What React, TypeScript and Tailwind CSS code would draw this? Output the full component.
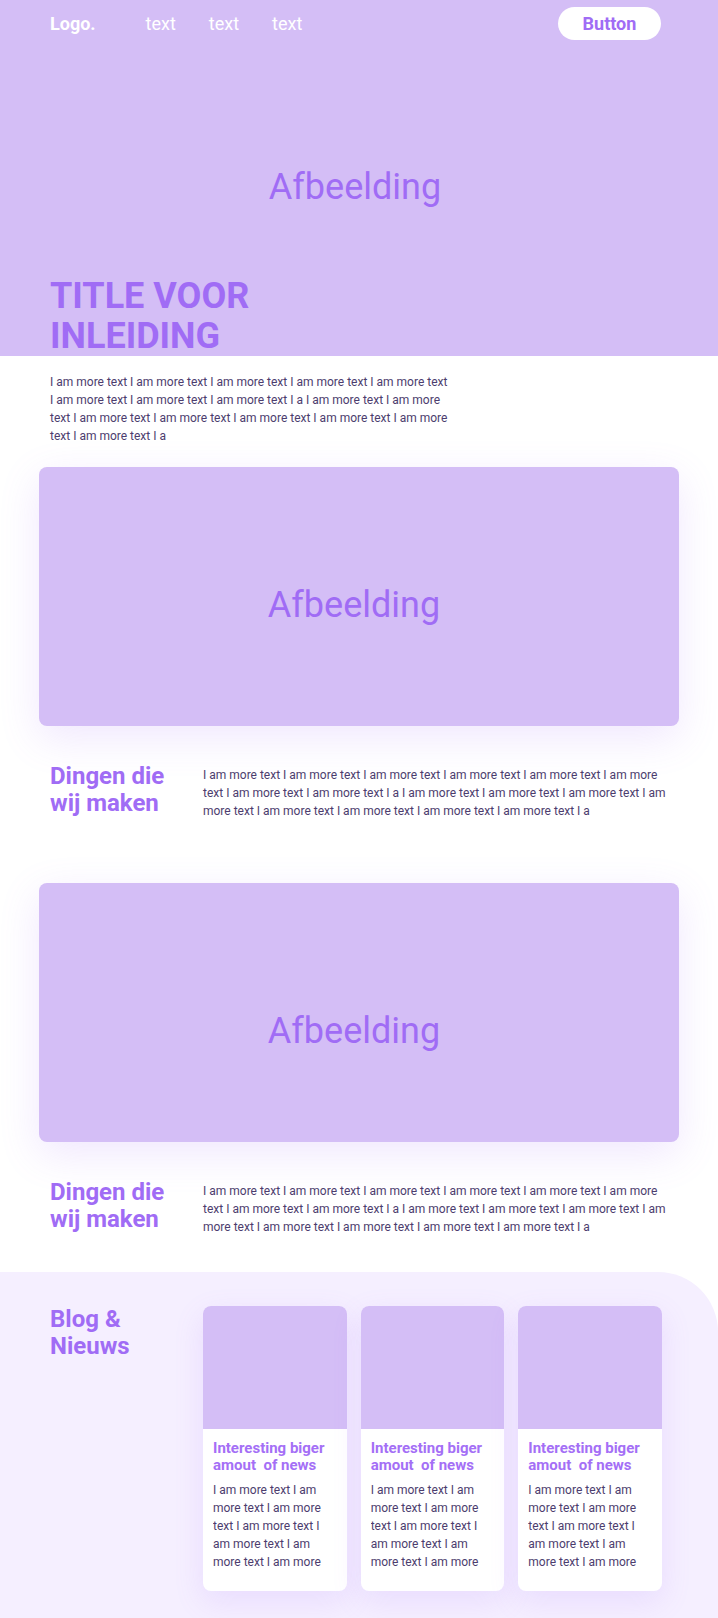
const para = "I am more text I am more text I am more text I am more text I am more text I am more text I am more text I am more text I a I am more text I am more text I am more text I am more text I am more text I am more text I am more text I am more text I a";

const cardText = "I am more text I am more text I am more text I am more text I am more text I am more text I am more";

function ImageCard({ offset }: { offset: string }) {
  return (
    <div className="mx-[39px] flex h-[259px] items-center justify-center rounded-lg bg-[#d4bef6] shadow-[0_12px_40px_rgba(160,108,247,0.16)]">
      <span className={`pr-[10px] text-[36px] text-[#a06cf5] ${offset}`}>Afbeelding</span>
    </div>
  );
}

function Feature() {
  return (
    <div className="flex items-start px-[50px]">
      <h2 className="w-[153px] shrink-0 text-[24px] font-bold leading-[27px] text-[#a06cf5]">
        Dingen die
        <br />
        wij maken
      </h2>
      <p className="mt-[3px] w-[466px] text-[12px] leading-[18px] text-[#4c3d6e]">{para}</p>
    </div>
  );
}

function BlogCard() {
  return (
    <div className="overflow-hidden rounded-lg bg-white shadow-[0_10px_30px_rgba(160,108,247,0.14)]">
      <div className="h-[123px] bg-[#d4bef6]" />
      <div className="px-[10px] pb-[20px] pt-[11px]">
        <h3 className="text-[15px] font-bold leading-[17px] text-[#a46ff6]">
          Interesting biger
          <br />
          amout&nbsp; of news
        </h3>
        <p className="mt-[7px] h-[90px] overflow-hidden text-[12px] leading-[18px] text-[#4c3d6e]">{cardText}</p>
      </div>
    </div>
  );
}

export default function App() {
  return (
    <div className="min-h-[1618px] bg-white font-['Roboto',sans-serif]">
      <section className="bg-[#d4bef6] px-[50px]">
        <nav className="flex h-[47px] items-center">
          <span className="text-[18px] font-bold text-white">Logo.</span>
          <div className="ml-[50px] flex gap-[33px] text-[18px] text-white">
            <span>text</span>
            <span>text</span>
            <span>text</span>
          </div>
          <button className="ml-auto mr-[7px] h-[33px] w-[103px] rounded-full bg-white text-[18px] font-bold text-[#a06cf5]">
            Button
          </button>
        </nav>
        <div className="mt-[118px] pr-[8px] text-center text-[36px] leading-[44px] text-[#a06cf5]">Afbeelding</div>
        <h1 className="mt-[67px] text-[36px] font-bold leading-[40px] text-[#a06cf5]">
          TITLE VOOR
          <br />
          INLEIDING
        </h1>
      </section>

      <p className="mt-[17px] w-[500px] px-[50px] text-[12px] leading-[18px] text-[#4c3d6e]">{para}</p>

      <div className="mt-[22px]">
        <ImageCard offset="pt-[16px]" />
      </div>
      <div className="mt-[37px]">
        <Feature />
      </div>

      <div className="mt-[63px]">
        <ImageCard offset="pt-[36px]" />
      </div>
      <div className="mt-[37px]">
        <Feature />
      </div>

      <section className="mt-[36px] flex rounded-tr-[60px] bg-[#f5efff] px-[50px] pb-[28px] pt-[34px]">
        <h2 className="w-[153px] shrink-0 text-[24px] font-bold leading-[27px] text-[#a06cf5]">
          Blog &amp;
          <br />
          Nieuws
        </h2>
        <div className="grid w-[459px] grid-cols-3 gap-[14px]">
          <BlogCard />
          <BlogCard />
          <BlogCard />
        </div>
      </section>
    </div>
  );
}
